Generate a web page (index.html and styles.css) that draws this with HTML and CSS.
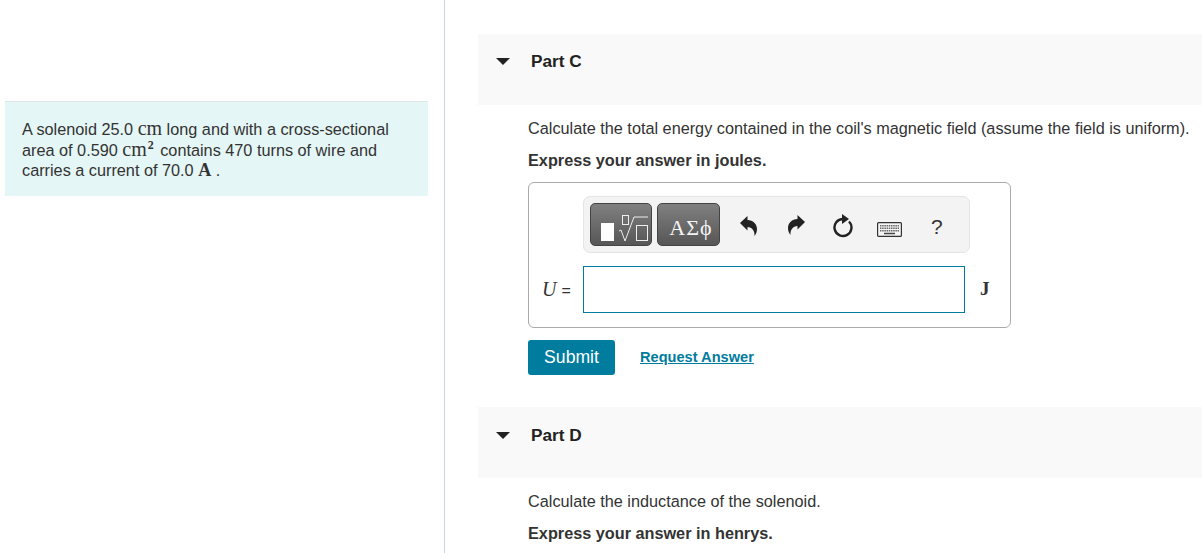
FILE: index.html
```html
<!DOCTYPE html>
<html lang="en">
<head>
    <meta charset="UTF-8">
    <title>Solenoid</title>
    <link rel="stylesheet" href="styles.css">
</head>
<body>
<div class="page">
    <div class="left">
        <div class="intro">
            A solenoid 25.0 <span class="math">cm</span> long and with a cross-sectional<br>
            area of 0.590 <span class="math">cm<sup>2</sup></span> contains 470 turns of wire and<br>
            carries a current of 70.0 <span class="math math_bold">A</span> .
        </div>
    </div>
    <div class="right">
        <div class="part part_c">
            <span class="arrow"></span>
            <span class="part_name">Part C</span>
        </div>
        <div class="body">
            <p class="question">Calculate the total energy contained in the coil's magnetic field (assume the field is uniform).</p>
            <p class="express">Express your answer in joules.</p>

            <div class="answer">
                <div class="toolbar">
                    <span class="tool_btn tool_btn_math">
                        <svg width="60" height="41" viewBox="0 0 60 41">
                            <rect x="10" y="19" width="13" height="18" fill="#fff"/>
                            <rect x="31.500" y="11.500" width="6" height="9" fill="none" stroke="#eee" stroke-width="1"/>
                            <path d="M28 27l2-1 4 11 9-24h14" fill="none" stroke="#eee" stroke-width="1"/>
                            <rect x="45.500" y="21.500" width="11" height="15" fill="none" stroke="#eee" stroke-width="1"/>
                        </svg>
                    </span>
                    <span class="tool_btn tool_btn_greek">ΑΣϕ</span>
                    <span class="tool tool_undo">
                        <svg width="18" height="20" viewBox="0 0 18 20">
                            <path d="M0 7L7.500 0v4C13 4 17 8 17 13c0 3-1 5-2.500 7C15 15 12 11 7.500 11v3.500z" fill="#222"/>
                        </svg>
                    </span>
                    <span class="tool tool_redo">
                        <svg width="18" height="20" viewBox="0 0 18 20">
                            <path d="M18 7L10.500 0v4C5 4 1 8 1 13c0 3 1 5 2.500 7C3 15 6 11 10.500 11v3.500z" fill="#222"/>
                        </svg>
                    </span>
                    <span class="tool tool_reset">
                        <svg width="22" height="24" viewBox="0 0 22 24">
                            <path d="M11 5A8.500 8.500 0 1 0 17 7.500" fill="none" stroke="#222" stroke-width="2.400"/>
                            <path d="M10 0l7 5-7 5z" fill="#222"/>
                        </svg>
                    </span>
                    <span class="tool tool_keys">
                        <svg width="25" height="15" viewBox="0 0 25 15">
                            <rect x=".6" y=".6" width="23.800" height="13.800" rx="1" fill="#f5f5f5" stroke="#333" stroke-width="1.200"/>
                            <path d="M3 3.700h19M3 6.200h19M3 8.700h19" stroke="#666" stroke-width="1.400" stroke-dasharray="1.500 .7"/>
                            <path d="M7 11.500h11" stroke="#444" stroke-width="1.500"/>
                        </svg>
                    </span>
                    <span class="tool tool_help">?</span>
                </div>
                <div class="answer_row">
                    <span class="label"><i>U</i> <span class="eq">=</span></span>
                    <div class="input"></div>
                    <span class="unit">J</span>
                </div>
            </div>

            <div class="actions">
                <button class="submit">Submit</button>
                <a class="request" href="#">Request Answer</a>
            </div>
        </div>

        <div class="part part_d">
            <span class="arrow"></span>
            <span class="part_name">Part D</span>
        </div>
        <div class="body">
            <p class="question">Calculate the inductance of the solenoid.</p>
            <p class="express">Express your answer in henrys.</p>
        </div>
    </div>
</div>
</body>
</html>
```

FILE: styles.css
```css
*{
    margin: 0;
    padding: 0;
    box-sizing: border-box;
}
body{
    font-family: "Liberation Sans", Arial, sans-serif;
    font-size: 16.250px;
    color: #333;
    background: #fff;
    overflow: hidden;
}
.page{
    display: flex;
    height: 553px;
    overflow: hidden;
}

.left{
    flex: none;
    width: 445px;
    padding: 101px 16px 0 5px;
    border-right: 1px solid #c8d6e0;
}
.intro{
    height: 95px;
    padding: 17px 0 0 17px;
    line-height: 20.500px;
    white-space: nowrap;
    background: #e5f6f6;
    border-top: 1px solid #dfe6ea;
}
.math{
    font-family: "Liberation Serif", "DejaVu Serif", serif;
    font-size: 20px;
    line-height: 0;
}
.math_bold{
    font-weight: bold;
    font-size: 18px;
}
.math sup{
    margin: 0 2px 0 1px;
    font-size: 12px;
    font-weight: bold;
    line-height: 0;
    vertical-align: 7px;
}

.right{
    flex: 1;
    min-width: 0;
    padding: 34px 0 0 33px;
}
.part{
    display: flex;
    height: 71px;
    padding: 18px 0 0 18px;
    background: #f9f9f9;
    font-size: 17.200px;
    font-weight: bold;
    color: #222;
}
.arrow{
    width: 0;
    height: 0;
    margin: 6px 21px 0 0;
    border-left: 7px solid transparent;
    border-right: 7px solid transparent;
    border-top: 7px solid #222;
}
.part_name{
    line-height: 19px;
}

.body{
    padding: 13px 0 0 50px;
    white-space: nowrap;
}
.question{
    line-height: 20px;
}
.express{
    margin-top: 12px;
    line-height: 20px;
    font-weight: bold;
}

.answer{
    width: 483px;
    height: 146px;
    margin-top: 12px;
    padding: 13px 0 0 13px;
    border: 1px solid #aaa;
    border-radius: 6px;
}
.toolbar{
    display: flex;
    align-items: center;
    width: 387px;
    height: 57px;
    margin-left: 41px;
    padding-left: 6px;
    background: #f3f3f3;
    border: 1px solid #e4e4e4;
    border-radius: 7px;
}
.tool_btn{
    display: flex;
    align-items: center;
    justify-content: center;
    height: 43px;
    border: 1px solid #444;
    border-radius: 5px;
    background: linear-gradient(#808080, #565656);
    color: #f4f4f4;
}
.tool_btn_math{
    width: 62px;
}
.tool_btn_greek{
    width: 63px;
    margin-left: 5px;
    padding: 6px 0 0 5px;
    font-family: "Liberation Serif", serif;
    font-size: 22px;
    letter-spacing: 1px;
}
.tool{
    display: flex;
    align-items: center;
    justify-content: center;
    color: #333;
}
.tool_undo{
    width: 18px;
    margin: 3px 0 0 20px;
}
.tool_redo{
    width: 18px;
    margin: 1px 0 0 29px;
}
.tool_reset{
    width: 22px;
    margin: 3px 0 0 27px;
}
.tool_keys{
    width: 25px;
    margin: 10px 0 0 23px;
}
.tool_help{
    margin: 4px 0 0 29px;
    font-size: 21px;
}

.answer_row{
    display: flex;
    align-items: center;
    margin-top: 13px;
}
.label{
    flex: none;
    width: 41px;
    font-family: "Liberation Serif", serif;
    font-size: 20px;
    white-space: nowrap;
}
.eq{
    font-family: "Liberation Sans", sans-serif;
    font-size: 16px;
}
.input{
    flex: none;
    width: 382px;
    height: 47px;
    background: #fff;
    border: 1px solid #007c9e;
}
.unit{
    margin: -1px 0 0 15px;
    font-family: "Liberation Serif", serif;
    font-size: 19px;
    font-weight: bold;
}

.actions{
    display: flex;
    align-items: center;
    margin-top: 12px;
}
.submit{
    width: 87px;
    height: 35px;
    font-family: "Liberation Sans", sans-serif;
    font-size: 17.600px;
    color: #fff;
    background: #007c9e;
    border: none;
    border-radius: 3px;
}
.request{
    margin: -2px 0 0 25px;
    font-size: 14.600px;
    font-weight: bold;
    color: #007c9e;
}
.part_d{
    margin-top: 32px;
    padding-top: 19px;
}
```
